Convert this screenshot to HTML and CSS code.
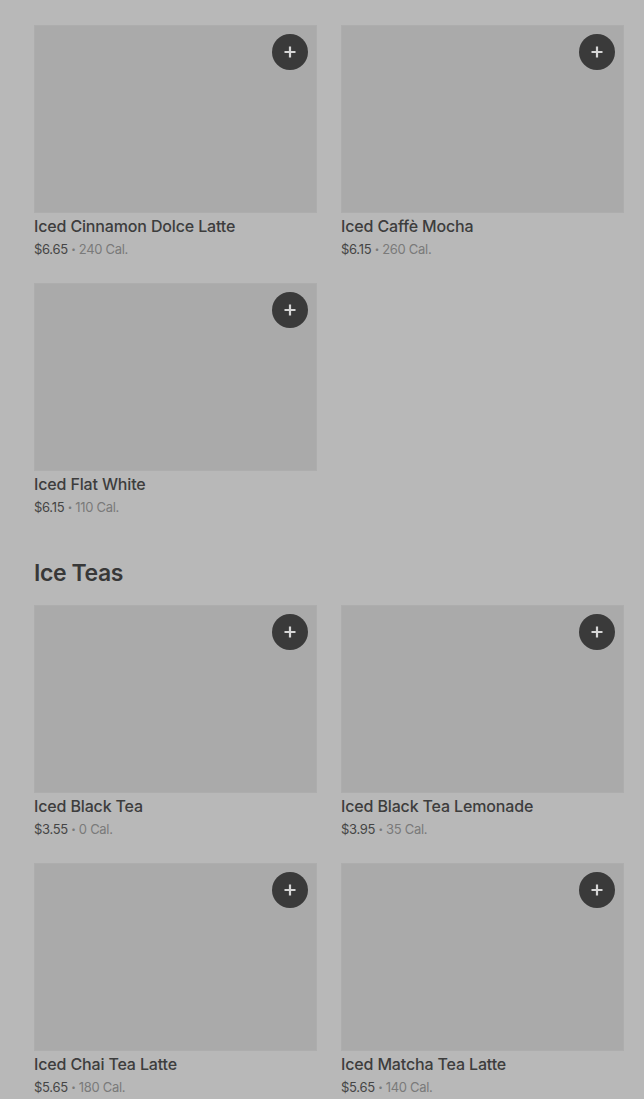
FILE: index.html
```html
<!DOCTYPE html>
<html>
<head>
<meta charset="utf-8">
<link rel="stylesheet" href="styles.css">
</head>
<body>
<main class="page">
  <section class="section">
    <div class="grid">
      <div class="card">
        <div class="thumb"><button class="add"><svg viewBox="0 0 16 16" width="16" height="16"><path d="M8 2.5v11M2.5 8h11" stroke="currentColor" stroke-width="2.2"/></svg></button></div>
        <div class="title">Iced Cinnamon Dolce Latte</div>
        <div class="meta"><span class="price">$6.65</span> <span class="dot">•</span> 240 Cal.</div>
      </div>
      <div class="card">
        <div class="thumb"><button class="add"><svg viewBox="0 0 16 16" width="16" height="16"><path d="M8 2.5v11M2.5 8h11" stroke="currentColor" stroke-width="2.2"/></svg></button></div>
        <div class="title">Iced Caffè Mocha</div>
        <div class="meta"><span class="price">$6.15</span> <span class="dot">•</span> 260 Cal.</div>
      </div>
      <div class="card">
        <div class="thumb"><button class="add"><svg viewBox="0 0 16 16" width="16" height="16"><path d="M8 2.5v11M2.5 8h11" stroke="currentColor" stroke-width="2.2"/></svg></button></div>
        <div class="title">Iced Flat White</div>
        <div class="meta"><span class="price">$6.15</span> <span class="dot">•</span> 110 Cal.</div>
      </div>
    </div>
  </section>
  <section class="section">
    <h2 class="heading">Ice Teas</h2>
    <div class="grid">
      <div class="card">
        <div class="thumb"><button class="add"><svg viewBox="0 0 16 16" width="16" height="16"><path d="M8 2.5v11M2.5 8h11" stroke="currentColor" stroke-width="2.2"/></svg></button></div>
        <div class="title">Iced Black Tea</div>
        <div class="meta"><span class="price">$3.55</span> <span class="dot">•</span> 0 Cal.</div>
      </div>
      <div class="card">
        <div class="thumb"><button class="add"><svg viewBox="0 0 16 16" width="16" height="16"><path d="M8 2.5v11M2.5 8h11" stroke="currentColor" stroke-width="2.2"/></svg></button></div>
        <div class="title">Iced Black Tea Lemonade</div>
        <div class="meta"><span class="price">$3.95</span> <span class="dot">•</span> 35 Cal.</div>
      </div>
      <div class="card">
        <div class="thumb"><button class="add"><svg viewBox="0 0 16 16" width="16" height="16"><path d="M8 2.5v11M2.5 8h11" stroke="currentColor" stroke-width="2.2"/></svg></button></div>
        <div class="title">Iced Chai Tea Latte</div>
        <div class="meta"><span class="price">$5.65</span> <span class="dot">•</span> 180 Cal.</div>
      </div>
      <div class="card">
        <div class="thumb"><button class="add"><svg viewBox="0 0 16 16" width="16" height="16"><path d="M8 2.5v11M2.5 8h11" stroke="currentColor" stroke-width="2.2"/></svg></button></div>
        <div class="title">Iced Matcha Tea Latte</div>
        <div class="meta"><span class="price">$5.65</span> <span class="dot">•</span> 140 Cal.</div>
      </div>
    </div>
  </section>
</main>
</body>
</html>
```
FILE: styles.css
```css
html, body {
  margin: 0;
  padding: 0;
  background: #b8b8b8;
  font-family: Inter, "Noto Sans", sans-serif;
  overflow: hidden;
}
.page {
  padding: 25px 20px 0 34px;
}
.section {
  margin-bottom: 43px;
}
.heading {
  margin: 0 0 18px;
  font-size: 23px;
  line-height: 28px;
  font-weight: 600;
  letter-spacing: -0.4px;
  color: #383838;
}
.grid {
  display: grid;
  grid-template-columns: 283px 283px;
  column-gap: 24px;
  row-gap: 25px;
}
.card {
  display: flex;
  flex-direction: column;
}
.thumb {
  position: relative;
  height: 188px;
  background: #aaaaaa;
  box-shadow: inset 0 0 0 1px #adadad;
}
.add {
  position: absolute;
  top: 9px;
  right: 9px;
  width: 36px;
  height: 36px;
  border: 0;
  padding: 0;
  border-radius: 50%;
  background: #3a3a3a;
  color: #d6d6d6;
  display: flex;
  align-items: center;
  justify-content: center;
}
.title {
  margin-top: 3px;
  font-size: 16px;
  line-height: 20px;
  font-weight: 500;
  letter-spacing: -0.15px;
  color: #3d3d3d;
}
.meta {
  margin-top: 4px;
  font-size: 13px;
  line-height: 18px;
  letter-spacing: -0.3px;
  color: #7a7a7a;
}
.price {
  color: #454545;
}
.dot {
  font-size: 8px;
  vertical-align: 2px;
}
```
